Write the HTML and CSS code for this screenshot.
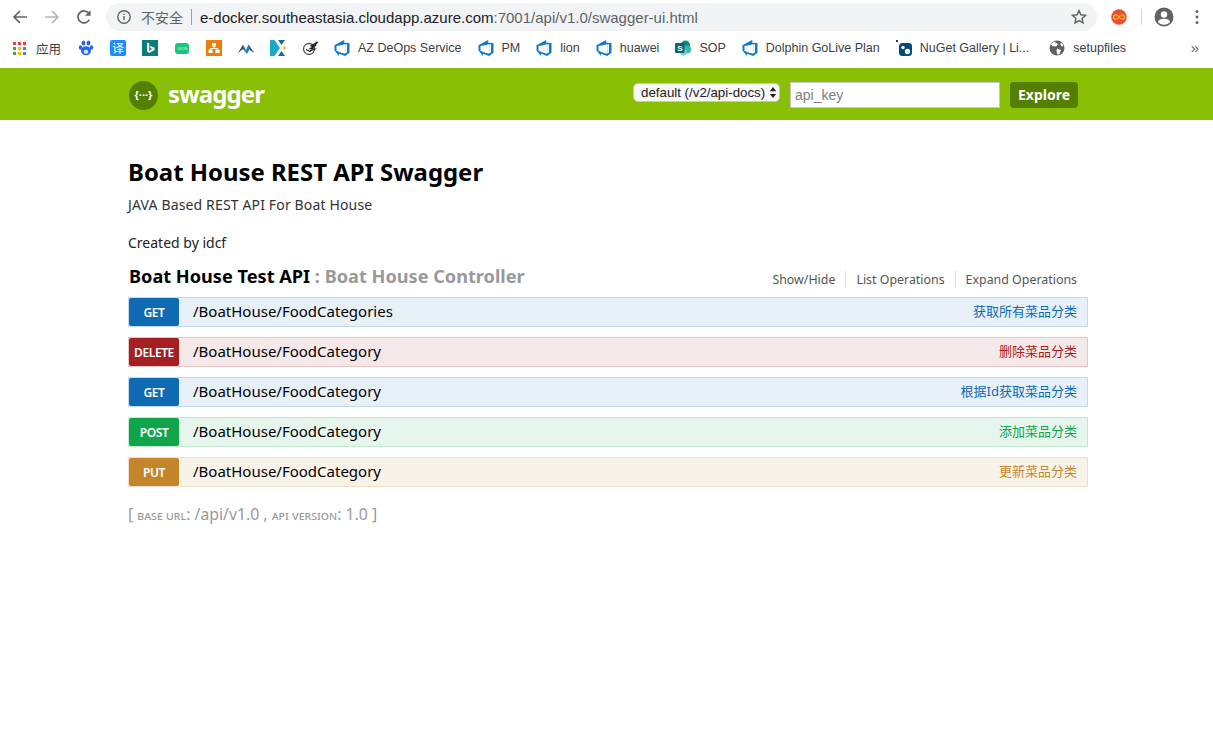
FILE: index.html
```html
<!DOCTYPE html>
<html lang="zh">

<head>
    <meta charset="utf-8" />
    <title>Swagger UI</title>
    <link rel="stylesheet" href="styles.css">
</head>

<body>
    <div class="toolbar">
        <svg class="nav-icon" viewBox="0 0 16 16"><path d="M15 8H2.5M8 2 2 8l6 6" fill="none" stroke="#5f6368" stroke-width="1.7"/></svg>
        <svg class="nav-icon" viewBox="0 0 16 16"><path d="M1 8h12.5M8 2l6 6-6 6" fill="none" stroke="#b4b6b9" stroke-width="1.7"/></svg>
        <svg class="nav-icon" viewBox="0 0 16 16"><path d="M13.4 10.500A6 6 0 1 1 12.600 4" fill="none" stroke="#5f6368" stroke-width="1.700"/><path d="M14.600 1.200v5.600H9z" fill="#5f6368"/></svg>
        <div class="omnibox">
            <svg class="info-icon" viewBox="0 0 16 16"><circle cx="8" cy="8" r="6.200" fill="none" stroke="#5f6368" stroke-width="1.400"/><rect x="7.300" y="7" width="1.400" height="4.200" fill="#5f6368"/><rect x="7.300" y="4.600" width="1.400" height="1.400" fill="#5f6368"/></svg>
            <span class="insecure">不安全</span>
            <span class="omni-sep"></span>
            <span class="url">e-docker.southeastasia.cloudapp.azure.com<span class="url-rest">:7001/api/v1.0/swagger-ui.html</span></span>
            <svg class="star-icon" viewBox="0 0 16 16"><path d="M8 1.600l1.900 4.200 4.600.5-3.400 3.100.9 4.500L8 11.600l-4 2.300.9-4.500-3.400-3.100 4.600-.5z" fill="none" stroke="#5f6368" stroke-width="1.400"/></svg>
        </div>
        <svg class="ext-icon" viewBox="0 0 16 16"><circle cx="8" cy="8" r="7.800" fill="#ea4f35"/><path d="M8 8C6.800 6.300 5.800 5.800 4.800 5.800a2.200 2.200 0 0 0 0 4.400C5.800 10.200 6.800 9.700 8 8c1.200-1.700 2.200-2.200 3.200-2.200a2.200 2.200 0 0 1 0 4.400C10.200 10.200 9.200 9.700 8 8z" fill="none" stroke="#f7b52c" stroke-width="1.300"/></svg>
        <span class="tool-sep"></span>
        <svg class="user-icon" viewBox="0 0 20 20"><circle cx="10" cy="10" r="9.500" fill="#5f6368"/><circle cx="10" cy="7.500" r="3.200" fill="#fff"/><path d="M3.800 14.500C5 12.500 7.500 11.800 10 11.800s5 .7 6.200 2.700A7.800 7.800 0 0 1 10 17.800a7.800 7.800 0 0 1-6.200-3.300z" fill="#fff"/></svg>
        <svg class="menu-icon" viewBox="0 0 4 16"><circle cx="2" cy="2.500" r="1.500" fill="#5f6368"/><circle cx="2" cy="8" r="1.500" fill="#5f6368"/><circle cx="2" cy="13.500" r="1.500" fill="#5f6368"/></svg>
    </div>

    <div class="bookmarks">
        <span class="bm bm-apps">
            <svg class="bm-apps-icon" viewBox="0 0 13 13">
                <rect x="0" y="0" width="3" height="3" fill="#ea4335"/><rect x="5" y="0" width="3" height="3" fill="#ea4335"/><rect x="10" y="0" width="3" height="3" fill="#ea4335"/>
                <rect x="0" y="5" width="3" height="3" fill="#34a853"/><rect x="5" y="5" width="3" height="3" fill="#fbbc05"/><rect x="10" y="5" width="3" height="3" fill="#4285f4"/>
                <rect x="0" y="10" width="3" height="3" fill="#34a853"/><rect x="5" y="10" width="3" height="3" fill="#fbbc05"/><rect x="10" y="10" width="3" height="3" fill="#4285f4"/>
            </svg>
            应用
        </span>
        <span class="bm"><svg class="bm-icon" viewBox="0 0 16 16"><ellipse cx="8" cy="10.800" rx="5" ry="4.500" fill="#2b63e8"/><ellipse cx="2.500" cy="7.500" rx="1.700" ry="2.300" fill="#2b63e8"/><ellipse cx="13.500" cy="7.500" rx="1.700" ry="2.300" fill="#2b63e8"/><ellipse cx="5.500" cy="3" rx="1.900" ry="2.500" fill="#2b63e8"/><ellipse cx="10.500" cy="3" rx="1.900" ry="2.500" fill="#2b63e8"/><ellipse cx="8" cy="11.800" rx="2.400" ry="2.100" fill="#cfe0ff"/></svg></span>
        <span class="bm"><svg class="bm-icon" viewBox="0 0 16 16"><rect width="16" height="16" rx="2" fill="#1a8cff"/><text x="2" y="12.500" class="icon-yi">译</text></svg></span>
        <span class="bm"><svg class="bm-icon" viewBox="0 0 16 16"><rect width="16" height="16" fill="#0a7d78"/><path d="M5 2.500l2.200.8v7.400l3-1.700-1.500-.7-.9-2.300 4.700 1.600v2.500l-5.300 3L5 11.500z" fill="#fff"/></svg></span>
        <span class="bm"><svg class="bm-icon" viewBox="0 0 16 16"><rect x="1" y="3" width="14" height="11" rx="3" fill="#16c77a"/><text x="3" y="10.200" class="icon-json">JSON</text></svg></span>
        <span class="bm"><svg class="bm-icon" viewBox="0 0 16 16"><rect width="16" height="16" fill="#ef7d0a"/><path d="M6 3h4v3.500H6zM2.500 9.500h4V13h-4zM9.500 9.500h4V13h-4z" fill="#fff"/><path d="M8 6v2.500M4.500 9.500v-1h7v1" stroke="#fff" fill="none"/></svg></span>
        <span class="bm"><svg class="bm-icon" viewBox="0 0 16 16"><path d="M0 13 5 5l3 5 2.500-5.500L16 13l-4.500-3.500L9 14 5 9z" fill="#1b7fd6"/><path d="M0 13 5 5l2 4-3 .5z" fill="#46555f"/><path d="M10.500 4.500 16 13l-4-3z" fill="#46555f"/></svg></span>
        <span class="bm"><svg class="bm-icon" viewBox="0 0 16 16"><path d="M0 0h4.500L10 8l-5.500 8H0z" fill="#1aa9c9"/><path d="M8 0h7l-3.500 5zM8 16h7l-3.500-5z" fill="#1b6d8f"/><path d="M13 8l1.500-2.200L16 8l-1.500 2.200z" fill="#f2b632"/></svg></span>
        <span class="bm"><svg class="bm-icon" viewBox="0 0 16 16"><circle cx="7" cy="9" r="5.500" fill="none" stroke="#555" stroke-width="1.300"/><path d="M4 9.500 8 11.500l7.500-9.500-7 4 5.500-.5-5.500 3 4 .5-4.500 2" fill="none" stroke="#222" stroke-width="1.300"/></svg></span>
        <span class="bm"><svg class="bm-icon" viewBox="0 0 16 16"><use href="#azure"/></svg>AZ DeOps Service</span>
        <span class="bm"><svg class="bm-icon" viewBox="0 0 16 16"><use href="#azure"/></svg>PM</span>
        <span class="bm"><svg class="bm-icon" viewBox="0 0 16 16"><use href="#azure"/></svg>lion</span>
        <span class="bm"><svg class="bm-icon" viewBox="0 0 16 16"><use href="#azure"/></svg>huawei</span>
        <span class="bm"><svg class="bm-icon" viewBox="0 0 16 16"><circle cx="10.500" cy="5" r="4.500" fill="#0b8a8f"/><circle cx="12" cy="9.500" r="4" fill="#36b5b0"/><circle cx="8.500" cy="12.500" r="3.300" fill="#7fd3ce"/><rect x="0" y="3" width="9.500" height="10" rx="1" fill="#036c70"/><text x="2.300" y="11" class="sp-s">S</text></svg>SOP</span>
        <span class="bm"><svg class="bm-icon" viewBox="0 0 16 16"><use href="#azure"/></svg>Dolphin GoLive Plan</span>
        <span class="bm bm-nuget"><svg class="bm-icon" viewBox="0 0 16 16"><rect x="0" y="0" width="2" height="2" fill="#004880"/><rect x="3" y="3" width="13" height="13" rx="3.500" fill="#004880"/><circle cx="7" cy="7.500" r="1.700" fill="#fff"/><circle cx="11.500" cy="11.500" r="2.700" fill="#fff"/></svg>NuGet Gallery | Li...</span>
        <span class="bm"><svg class="bm-icon" viewBox="0 0 16 16"><circle cx="8" cy="8" r="7.500" fill="#5f6368"/><path d="M5 1.500 9 4 7 6.500 3.500 6 1.500 4.500zM8 8.500l4 1.500-1.500 4-2 .8-1-3.500zM13 3l1.500 3-2 .5-1.500-2.500z" fill="#fff"/></svg>setupfiles</span>
        <span class="bm-more">»</span>
    </div>

    <svg class="defs">
        <symbol id="azure" viewBox="0 0 16 16">
            <path d="M15.500 3v9.800l-4.200 3.200-6.300-2.200v2.100L.5 10.500V5.300L10.200 0l.1 2.800z M11 4.500 5 5.800v6l-2.500-1V6z M11.200 4.500v9l1.800-1V4z" fill="#0f78d4" fill-rule="evenodd"/>
            <path d="M5 5.800 11 4.300v9.400l-6-1.800z" fill="#fff"/>
        </symbol>
    </svg>

    <div class="swagger-header">
        <div class="header-inner">
            <div class="logo">
                <div class="logo-badge">{···}</div>
                <span class="logo-text">swagger</span>
            </div>
            <form class="api-form">
                <div class="fake-select">default (/v2/api-docs)
                    <svg class="select-arrows" viewBox="0 0 8 12"><path d="M4 0l3.500 4.500h-7zM4 12 .5 7.500h7z" fill="#222"/></svg>
                </div>
                <input class="api-key" type="text" placeholder="api_key">
                <a class="explore">Explore</a>
            </form>
        </div>
    </div>

    <div class="container">
        <h1>Boat House REST API Swagger</h1>
        <p class="desc">JAVA Based REST API For Boat House</p>
        <p class="created">Created by idcf</p>

        <div class="resource-head">
            <h2>Boat House Test API <span class="ctrl">: Boat House Controller</span></h2>
            <ul class="options">
                <li>Show/Hide</li>
                <li>List Operations</li>
                <li>Expand Operations</li>
            </ul>
        </div>

        <div class="op op-get">
            <span class="method">GET</span>
            <span class="path">/BoatHouse/FoodCategories</span>
            <span class="summary">获取所有菜品分类</span>
        </div>
        <div class="op op-delete">
            <span class="method">DELETE</span>
            <span class="path">/BoatHouse/FoodCategory</span>
            <span class="summary">删除菜品分类</span>
        </div>
        <div class="op op-get">
            <span class="method">GET</span>
            <span class="path">/BoatHouse/FoodCategory</span>
            <span class="summary">根据Id获取菜品分类</span>
        </div>
        <div class="op op-post">
            <span class="method">POST</span>
            <span class="path">/BoatHouse/FoodCategory</span>
            <span class="summary">添加菜品分类</span>
        </div>
        <div class="op op-put">
            <span class="method">PUT</span>
            <span class="path">/BoatHouse/FoodCategory</span>
            <span class="summary">更新菜品分类</span>
        </div>

        <div class="footer-info">[ <span class="sc">base url</span>: /api/v1.0 , <span class="sc">api version</span>: 1.0 ]</div>
    </div>
</body>

</html>
```

FILE: styles.css
```css
html,
body {
    margin: 0;
    padding: 0;
    background: #fff;
    color: #000;
    font-family: "Noto Sans", "Noto Sans CJK SC", sans-serif;
}

.defs {
    position: absolute;
    width: 0;
    height: 0;
}

/* browser chrome */
.toolbar {
    display: flex;
    align-items: center;
    height: 34px;
    padding-left: 12px;
    box-sizing: border-box;
}

.nav-icon {
    width: 16px;
    height: 16px;
    margin-right: 16px;
    flex: none;
}

.omnibox {
    display: flex;
    align-items: center;
    width: 991px;
    height: 28px;
    margin-left: -2px;
    padding: 0 10px;
    box-sizing: border-box;
    border-radius: 14px;
    background: #f1f3f4;
    font-family: "Liberation Sans", "Noto Sans CJK SC", sans-serif;
    font-size: 15px;
    flex: none;
}

.info-icon {
    width: 16px;
    height: 16px;
    flex: none;
}

.insecure {
    margin-left: 9px;
    color: #5f6368;
    font-size: 14px;
}

.omni-sep {
    width: 1px;
    height: 16px;
    margin: 0 8px;
    background: #9aa0a6;
}

.url {
    color: #202124;
    white-space: nowrap;
}

.url-rest {
    color: #5f6368;
}

.star-icon {
    width: 16px;
    height: 16px;
    margin-left: auto;
    flex: none;
}

.ext-icon {
    width: 16px;
    height: 16px;
    margin-left: 14px;
    flex: none;
}

.tool-sep {
    width: 1px;
    height: 16px;
    margin: 0 12px 0 14px;
    background: #d5d7da;
}

.user-icon {
    width: 20px;
    height: 20px;
    flex: none;
}

.menu-icon {
    width: 4px;
    height: 16px;
    margin-left: 21px;
    flex: none;
}

.bookmarks {
    position: relative;
    display: flex;
    align-items: center;
    height: 34px;
    padding: 0 0 6px 13px;
    box-sizing: border-box;
    font-family: "Liberation Sans", "Noto Sans CJK SC", sans-serif;
    font-size: 12.5px;
    color: #3c4043;
    white-space: nowrap;
}

.bm {
    display: flex;
    align-items: center;
    gap: 8px;
    margin-right: 16px;
}

.bm-apps {
    gap: 10px;
    margin-right: 17px;
}

.bm-nuget {
    margin-right: 20px;
}

.bm-icon {
    width: 16px;
    height: 16px;
    flex: none;
}

.bm-apps-icon {
    width: 13px;
    height: 13px;
    flex: none;
}

.icon-yi {
    font-size: 12px;
    fill: #fff;
}

.icon-json {
    font-size: 3.800px;
    fill: #d8f7e8;
}

.sp-s {
    font-size: 8px;
    font-weight: bold;
    fill: #fff;
}

.bm-more {
    position: absolute;
    right: 14px;
    top: 5px;
    font-size: 15px;
    color: #5f6368;
}

/* swagger header */
.swagger-header {
    height: 52px;
    background: #89bf04;
}

.header-inner {
    display: flex;
    align-items: center;
    justify-content: space-between;
    width: 960px;
    height: 100%;
    margin-left: 128px;
    padding: 2px 10px 0 1px;
    box-sizing: border-box;
}

.logo {
    display: flex;
    align-items: center;
    gap: 10px;
}

.logo-badge {
    width: 29px;
    height: 29px;
    border-radius: 50%;
    background: #547f00;
    color: #fff;
    font-size: 11px;
    font-weight: bold;
    line-height: 27px;
    text-align: center;
}

.logo-text {
    padding-bottom: 3px;
    color: #fff;
    font-size: 24px;
    font-weight: bold;
    line-height: 1;
    letter-spacing: -0.9px;
}

.api-form {
    display: flex;
    align-items: center;
    margin: 0;
}

.fake-select {
    display: flex;
    align-items: center;
    justify-content: space-between;
    width: 147px;
    height: 19px;
    margin-top: -5px;
    padding: 0 2px 0 7px;
    box-sizing: border-box;
    border: 1px solid #c5c8c9;
    border-radius: 5px;
    background: #f8f8f8;
    color: #222;
    font-family: "Liberation Sans", sans-serif;
    font-size: 13.300px;
}

.select-arrows {
    width: 8px;
    height: 11px;
}

.api-key {
    width: 210px;
    height: 26px;
    margin: 0 10px;
    padding: 3px 4px;
    box-sizing: border-box;
    border: 1px solid #c5c8c9;
    border-radius: 0;
    background: #fff;
    font-family: "Liberation Sans", sans-serif;
    font-size: 14px;
}

.api-key::placeholder {
    color: #808080;
}

.explore {
    display: block;
    width: 68px;
    height: 26px;
    border-radius: 4px;
    background: #547f00;
    color: #fff;
    font-size: 14px;
    font-weight: bold;
    line-height: 26px;
    text-align: center;
}

/* content */
.container {
    width: 960px;
    margin-left: 128px;
}

h1 {
    margin: 0;
    padding-top: 35px;
    font-size: 23.900px;
    font-weight: bold;
    line-height: 33px;
}

.desc {
    margin: 7px 0 0;
    color: #333;
    font-size: 14px;
    line-height: 20px;
    letter-spacing: 0.15px;
}

.created {
    margin: 18px 0 0;
    color: #222;
    font-size: 14px;
    line-height: 20px;
}

.resource-head {
    display: flex;
    align-items: flex-start;
    justify-content: space-between;
    height: 28px;
    margin-top: 10px;
}

h2 {
    margin: 0 0 0 1px;
    color: #000;
    font-size: 18.150px;
    font-weight: bold;
    line-height: 27px;
    white-space: nowrap;
}

.ctrl {
    color: #999;
}

.options {
    display: flex;
    margin: 8px 0 0;
    padding: 0;
    list-style: none;
    color: #555;
    font-size: 12.400px;
}

.options li {
    padding: 0 10px;
    border-right: 1px solid #ddd;
    line-height: 17px;
}

.options li:last-child {
    padding-right: 11px;
    border-right: none;
}

.op {
    display: flex;
    align-items: center;
    height: 30px;
    margin-top: 10px;
    padding-right: 10px;
    box-sizing: border-box;
    border: 1px solid;
}

.resource-head + .op {
    margin-top: 6px;
}

.method {
    width: 50px;
    height: 28px;
    border-radius: 2px;
    color: #fff;
    font-size: 12px;
    font-weight: 600;
    letter-spacing: -0.4px;
    line-height: 30px;
    text-align: center;
    flex: none;
}

.path {
    margin-left: 14px;
    padding-bottom: 2px;
    font-size: 15px;
}

.summary {
    margin-left: auto;
    padding-bottom: 3px;
    font-size: 13px;
}

.op-get {
    background: #e7f0f7;
    border-color: #c3d9ec;
}

.op-get .method {
    background: #0f6ab4;
}

.op-get .summary {
    color: #0f6ab4;
}

.op-delete {
    background: #f5e8e8;
    border-color: #e8c6c7;
}

.op-delete .method {
    background: #a41e22;
}

.op-delete .summary {
    color: #a41e22;
}

.op-post {
    background: #e7f6ec;
    border-color: #c3e8d1;
}

.op-post .method {
    background: #10a54a;
}

.op-post .summary {
    color: #10a54a;
}

.op-put {
    background: #f9f2e9;
    border-color: #f0e0ca;
}

.op-put .method {
    background: #c5862b;
}

.op-put .summary {
    color: #c5862b;
}

.footer-info {
    margin-top: 16px;
    color: #999;
    font-size: 15.800px;
    line-height: 22px;
}

.sc {
    font-size: 13px;
    font-variant: small-caps;
}
```
